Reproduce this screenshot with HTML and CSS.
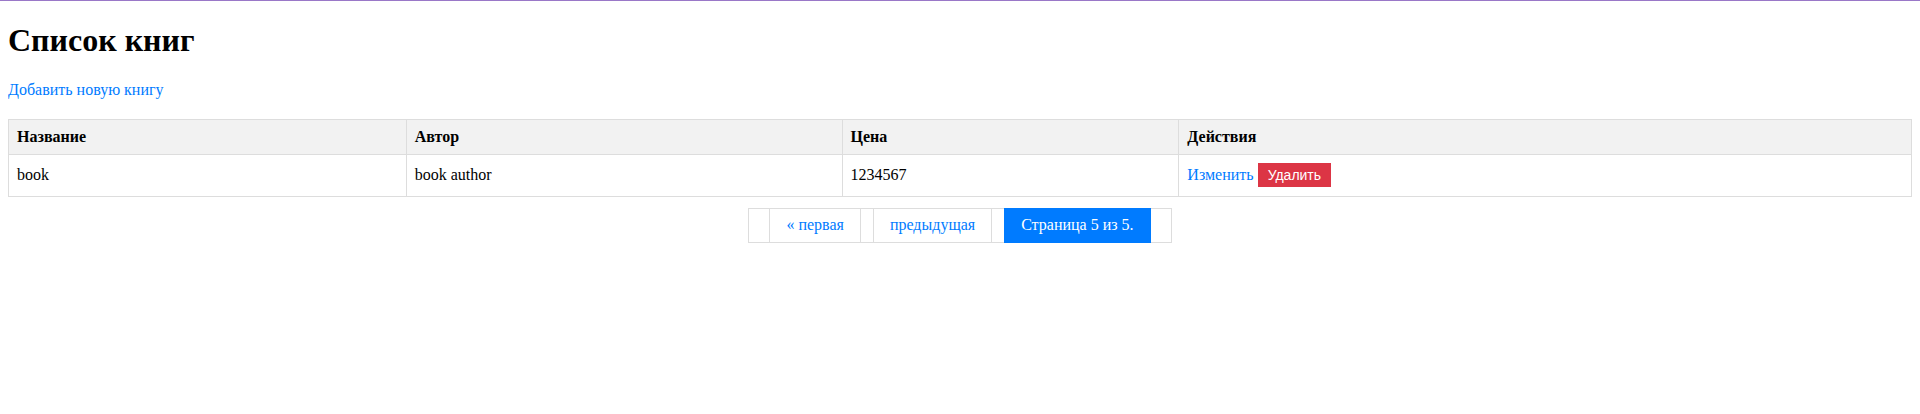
FILE: index.html
```html
<!DOCTYPE html>
<html lang="ru">
<head>
<meta charset="utf-8">
<title>Список книг</title>
<link rel="stylesheet" href="styles.css">
</head>
<body>
<h1 class="title">Список книг</h1>
<p class="add"><a class="link" href="#">Добавить новую книгу</a></p>
<table class="books">
  <colgroup>
    <col class="col-title">
    <col class="col-author">
    <col class="col-price">
    <col class="col-actions">
  </colgroup>
  <thead>
    <tr>
      <th>Название</th>
      <th>Автор</th>
      <th>Цена</th>
      <th>Действия</th>
    </tr>
  </thead>
  <tbody>
    <tr>
      <td>book</td>
      <td>book author</td>
      <td>1234567</td>
      <td><a class="link" href="#">Изменить</a> <button class="btn-delete" type="button">Удалить</button></td>
    </tr>
  </tbody>
</table>
<div class="pager-wrap">
  <div class="pager">
    <a class="page-link" href="#">« первая</a>
    <a class="page-link" href="#">предыдущая</a>
    <span class="page-current">Страница 5 из 5.</span>
  </div>
</div>
</body>
</html>
```

FILE: styles.css
```css
html {
  border-top: 1px solid #9a78c8;
}
body {
  margin: 0 8px 8px;
  padding: 0;
  font-family: "Liberation Serif", "Times New Roman", serif;
  font-size: 16px;
  color: #000;
  background: #fff;
}
.title {
  font-size: 32px;
  font-weight: bold;
  margin: 21.44px 0;
}
.add {
  margin: 16px 0 20px;
}
.link {
  color: #007bff;
  text-decoration: none;
}
.books {
  width: 100%;
  border-collapse: collapse;
  table-layout: fixed;
}
.col-title { width: 20.9%; }
.col-author { width: 22.9%; }
.col-price { width: 17.7%; }
.col-actions { width: 38.5%; }
.books th,
.books td {
  border: 1px solid #ddd;
  padding: 8px;
  text-align: left;
}
.books td {
  height: 25px;
}
.books th {
  background: #f2f2f2;
  font-weight: bold;
}
.btn-delete {
  font-family: "Liberation Sans", Arial, sans-serif;
  font-size: 14px;
  color: #fff;
  background: #dc3545;
  border: none;
  height: 24px;
  padding: 0 10px;
  cursor: pointer;
}
.pager-wrap {
  display: flex;
  justify-content: center;
  margin-top: 11px;
}
.pager {
  display: flex;
  align-items: stretch;
  gap: 12px;
  border: 1px solid #ddd;
  padding: 0 20px;
}
.page-link,
.page-current {
  display: flex;
  align-items: center;
  height: 33px;
  padding: 0 16px;
  border-left: 1px solid #ddd;
  border-right: 1px solid #ddd;
  color: #007bff;
  text-decoration: none;
}
.page-current {
  background: #007bff;
  border-color: #007bff;
  color: #fff;
  height: 35px;
  margin: -1px 0;
}
```
